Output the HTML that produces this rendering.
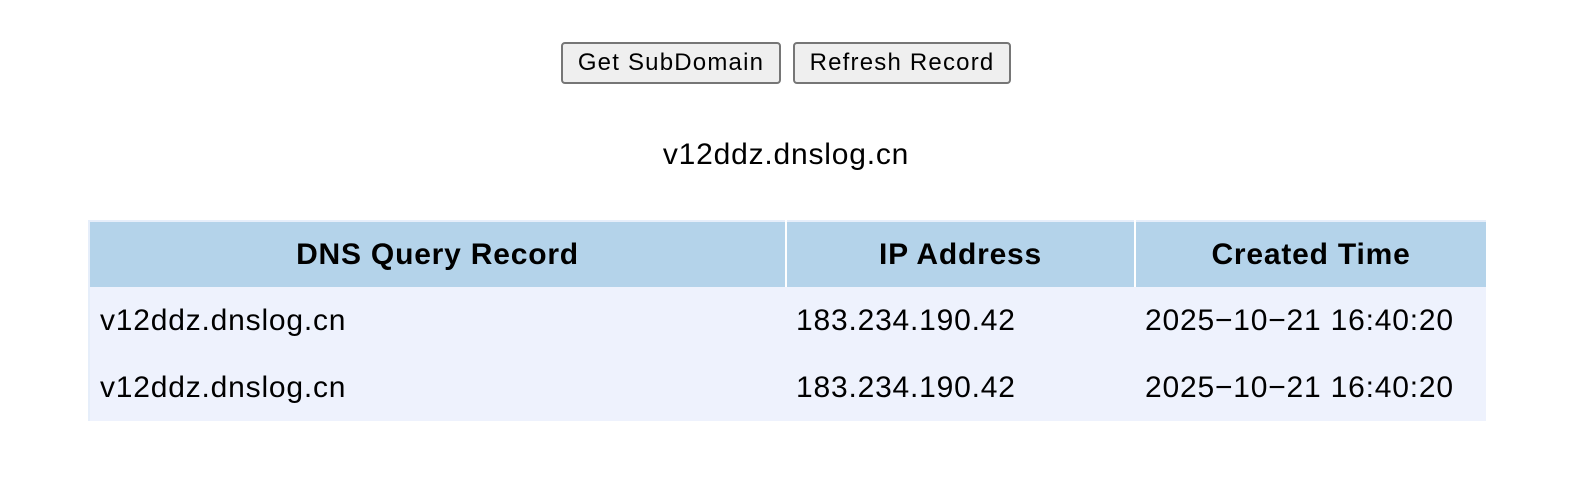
<!DOCTYPE html>
<html><head><style>
body{margin:0;background:#fff;font-family:"Liberation Sans",Arial,sans-serif;width:1572px;height:488px;position:relative;overflow:hidden}
.btns{position:absolute;top:42px;left:561px;display:flex;gap:12px}
button{height:42px;font-family:"Liberation Sans",Arial,sans-serif;font-size:24px;letter-spacing:1.2px;background:#efefef;border:2px solid #767676;border-radius:4px;padding:0;color:#000}
.dom{position:absolute;top:138px;left:0;width:1572px;text-align:center;font-size:30px;letter-spacing:0.8px}
table{position:absolute;left:88px;top:220px;width:1398px;border-collapse:collapse;font-size:30px;letter-spacing:0.8px;border-top:2px solid #e6eefa;border-left:2px solid #e6eefa}
th{background:#b4d3ea;height:65px;font-weight:bold;padding:0;border-left:2px solid #fff}
th:first-child{border-left:none}
td{background:#eef2fd;height:67px;padding:0 0 0 10px}
</style></head><body>
<div class="btns"><button style="width:220px">Get SubDomain</button><button style="width:218px">Refresh Record</button></div>
<div class="dom">v12ddz.dnslog.cn</div>
<table>
<tr><th style="width:695px">DNS Query Record</th><th style="width:347px">IP Address</th><th>Created Time</th></tr>
<tr><td>v12ddz.dnslog.cn</td><td>183.234.190.42</td><td>2025−10−21 16:40:20</td></tr>
<tr><td>v12ddz.dnslog.cn</td><td>183.234.190.42</td><td>2025−10−21 16:40:20</td></tr>
</table>
</body></html>
